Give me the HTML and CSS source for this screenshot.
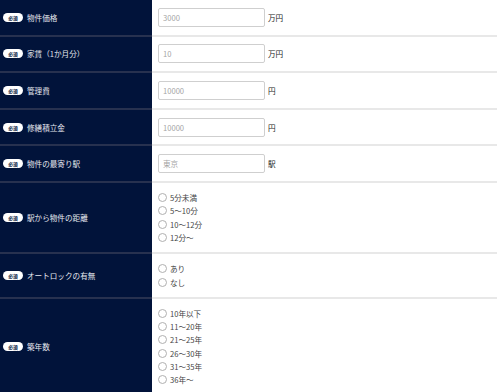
FILE: index.html
```html
<!DOCTYPE html>
<html lang="ja">

<head>
    <meta charset="utf-8">
    <meta name="viewport" content="width=device-width, initial-scale=1.0">
    <title>物件情報入力</title>
    <link rel="stylesheet" href="styles.css">
</head>

<body>
    <form class="estimate-form">
        <div class="row">
            <div class="head"><span class="badge">必須</span>物件価格</div>
            <div class="cell"><input type="text" class="field" placeholder="3000"><span class="unit">万円</span></div>
        </div>
        <div class="row">
            <div class="head"><span class="badge">必須</span>家賃（1か月分）</div>
            <div class="cell"><input type="text" class="field" placeholder="10"><span class="unit">万円</span></div>
        </div>
        <div class="row">
            <div class="head"><span class="badge">必須</span>管理費</div>
            <div class="cell"><input type="text" class="field" placeholder="10000"><span class="unit">円</span></div>
        </div>
        <div class="row">
            <div class="head"><span class="badge">必須</span>修繕積立金</div>
            <div class="cell"><input type="text" class="field" placeholder="10000"><span class="unit">円</span></div>
        </div>
        <div class="row">
            <div class="head"><span class="badge">必須</span>物件の最寄り駅</div>
            <div class="cell"><input type="text" class="field" placeholder="東京"><span class="unit">駅</span></div>
        </div>
        <div class="row">
            <div class="head"><span class="badge">必須</span>駅から物件の距離</div>
            <div class="cell choices">
                <label class="choice"><input type="radio" name="distance">5分未満</label>
                <label class="choice"><input type="radio" name="distance">5～10分</label>
                <label class="choice"><input type="radio" name="distance">10～12分</label>
                <label class="choice"><input type="radio" name="distance">12分～</label>
            </div>
        </div>
        <div class="row">
            <div class="head"><span class="badge">必須</span>オートロックの有無</div>
            <div class="cell choices">
                <label class="choice"><input type="radio" name="autolock">あり</label>
                <label class="choice"><input type="radio" name="autolock">なし</label>
            </div>
        </div>
        <div class="row">
            <div class="head"><span class="badge">必須</span>築年数</div>
            <div class="cell choices">
                <label class="choice"><input type="radio" name="age">10年以下</label>
                <label class="choice"><input type="radio" name="age">11～20年</label>
                <label class="choice"><input type="radio" name="age">21～25年</label>
                <label class="choice"><input type="radio" name="age">26～30年</label>
                <label class="choice"><input type="radio" name="age">31～35年</label>
                <label class="choice"><input type="radio" name="age">36年～</label>
            </div>
        </div>
    </form>
</body>

</html>
```

FILE: styles.css
```css
body {
    margin: 0;
    padding: 0;
    background-color: #fff;
    font-family: "Noto Sans CJK JP", "Liberation Sans", sans-serif;
    font-size: 7.6px;
    color: #333;
}

.estimate-form {
    display: flex;
    flex-direction: column;
}

.row {
    display: flex;
}

.head {
    width: 152px;
    flex-shrink: 0;
    display: flex;
    align-items: center;
    padding-left: 3px;
    box-sizing: border-box;
    background-color: #01133a;
    color: #e6e8ef;
    border-bottom: 2px solid #27314f;
}

.badge {
    display: inline-flex;
    align-items: center;
    justify-content: center;
    width: 20px;
    height: 9px;
    margin-right: 4px;
    border-radius: 5px;
    background-color: #fff;
    color: #01133a;
    font-size: 4.8px;
    font-weight: bold;
}

.cell {
    flex: 1;
    display: flex;
    align-items: center;
    box-sizing: border-box;
    min-height: 36.6px;
    padding-left: 6px;
    border-bottom: 2px solid #e8e8e8;
}

.field {
    width: 107px;
    height: 19px;
    box-sizing: border-box;
    margin: 0;
    padding: 0 4px;
    border: 1px solid #cfcfcf;
    border-radius: 2px;
    font-family: inherit;
    font-size: 7.6px;
}

.field::placeholder {
    color: #a5a5a5;
}

.unit {
    margin-left: 3px;
    color: #222;
}

.choices {
    flex-direction: column;
    align-items: flex-start;
    justify-content: center;
    padding-top: 8px;
    padding-bottom: 8px;
}

.choice {
    display: flex;
    align-items: center;
    height: 13.3px;
    color: #444;
}

.choice input {
    appearance: none;
    width: 9px;
    height: 9px;
    margin: 0 3px 0 0;
    border: 1px solid #b0b0b0;
    border-radius: 50%;
    background-color: #fff;
}
```
